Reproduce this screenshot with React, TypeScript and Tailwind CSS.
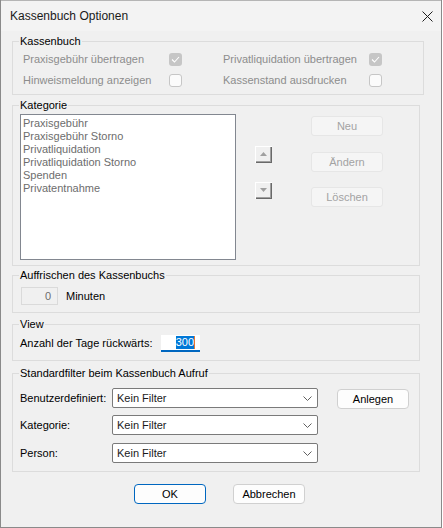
import React from 'react';

const font = { fontFamily: '"Liberation Sans", Arial, sans-serif' };

const CheckBox: React.FC<{ checked?: boolean }> = ({ checked }) => {
  if (checked) {
    return <div className="w-[13px] h-[13px] rounded-[3px] bg-[#c6c6c6] flex items-center justify-center">
        <svg width="9" height="7" viewBox="0 0 9 7">
          <path d="M1 3.5 L3.5 6 L8 1" fill="none" stroke="#ffffff" strokeWidth="1.1" />
        </svg>
      </div>;
  }
  return <div className="w-[13px] h-[13px] rounded-[3px] border border-[#c6c6c6] bg-[#fbfbfb]"></div>;
};

const ArrowButton: React.FC<{ down?: boolean }> = ({ down }) => {
  return <div className="w-[17px] h-[17px] bg-[#f0f0f0] flex items-center justify-center shadow-[inset_1px_1px_0_#ffffff,inset_-1px_-1px_0_#696969,inset_-2px_-2px_0_#a0a0a0]">
      <svg width="7" height="4" viewBox="0 0 7 4" className="-mt-px -ml-px">
        {down ? <path d="M0 0 H7 L3.5 4 Z" fill="#a0a0a0" /> : <path d="M0 4 H7 L3.5 0 Z" fill="#a0a0a0" />}
      </svg>
    </div>;
};

const DisabledButton: React.FC<{ label: string; className?: string }> = ({ label, className }) => {
  return <div className={`w-[72px] h-[20px] rounded-[3px] border border-[#e6e6e6] bg-[#f5f5f5] text-[#a3a3a3] text-[11px] flex items-center justify-center ${className || ''}`}>
      {label}
    </div>;
};

const Combo: React.FC = () => {
  return <div className="w-[206px] h-[20px] rounded-[2px] border border-[#7a7a7a] bg-white flex items-center pl-[4px] pr-[5px] text-[11px] text-[#1a1a1a]">
      <span className="flex-1">Kein Filter</span>
      <svg width="9" height="5" viewBox="0 0 9 5">
        <path d="M0.5 0.5 L4.5 4.5 L8.5 0.5" fill="none" stroke="#606060" strokeWidth="1" />
      </svg>
    </div>;
};

const Group: React.FC<{ title: string; className?: string; children: React.ReactNode }> = ({ title, className, children }) => {
  return <fieldset className={`w-[408px] border border-[#dcdcdc] ${className || ''}`}>
      <legend className="ml-[6px] px-[1px] text-[11px] leading-[15px] text-black">{title}</legend>
      {children}
    </fieldset>;
};

export default function App() {
  return <div style={font} className="w-[442px] h-[528px] bg-[#f0f0f0] border-l border-r border-b border-[#8a8a8a] flex flex-col text-[11px] text-black">
      <div className="h-[31px] bg-[#f3f3f3] flex items-center pl-[9px] pr-[8px] border-t border-[#b5b5b5]">
        <span className="flex-1 text-[12px] text-[#1a1a1a]">Kassenbuch Optionen</span>
        <svg width="11" height="11" viewBox="0 0 11 11">
          <path d="M0.5 0.5 L10.5 10.5 M10.5 0.5 L0.5 10.5" stroke="#1f1f1f" strokeWidth="1" />
        </svg>
      </div>

      <div className="pl-[11px] flex flex-col">
        <Group title="Kassenbuch" className="mt-[3px] pb-[3px]">
          <div className="flex flex-col pl-[10px] text-[#8d8d8d]">
            <div className="flex h-[21px] items-center">
              <div className="w-[200px] flex items-center">
                <span className="w-[146px]">Praxisgebühr übertragen</span>
                <CheckBox checked />
              </div>
              <div className="w-[200px] flex items-center">
                <span className="w-[146px]">Privatliquidation übertragen</span>
                <CheckBox checked />
              </div>
            </div>
            <div className="flex h-[21px] items-center">
              <div className="w-[200px] flex items-center">
                <span className="w-[146px]">Hinweismeldung anzeigen</span>
                <CheckBox />
              </div>
              <div className="w-[200px] flex items-center">
                <span className="w-[146px]">Kassenstand ausdrucken</span>
                <CheckBox />
              </div>
            </div>
          </div>
        </Group>

        <Group title="Kategorie" className="mt-[3px] pb-[5px]">
          <div className="flex pl-[7px] pt-[1px]">
            <div className="w-[216px] h-[146px] border border-[#828790] bg-white pl-[2px] pt-[2px] text-[11px] leading-[13px] text-[#6d6d6d]">
              <div>Praxisgebühr</div>
              <div>Praxisgebühr Storno</div>
              <div>Privatliquidation</div>
              <div>Privatliquidation Storno</div>
              <div>Spenden</div>
              <div>Privatentnahme</div>
            </div>
            <div className="ml-[19px] pt-[32px] flex flex-col">
              <ArrowButton />
              <div className="mt-[19px]">
                <ArrowButton down />
              </div>
            </div>
            <div className="ml-[39px] pt-[2px] flex flex-col">
              <DisabledButton label="Neu" />
              <DisabledButton label="Ändern" className="mt-[16px]" />
              <DisabledButton label="Löschen" className="mt-[15px]" />
            </div>
          </div>
        </Group>

        <Group title="Auffrischen des Kassenbuchs" className="mt-[2px] pb-[7px]">
          <div className="flex items-center pl-[8px] mt-[4px]">
            <div className="w-[37px] h-[18px] border border-[#dadada] bg-[#f0f0f0] flex items-center justify-end pr-[6px] text-[#6d6d6d]">0</div>
            <span className="ml-[8px]">Minuten</span>
          </div>
        </Group>

        <Group title="View" className="mt-[4px] pb-[8px]">
          <div className="flex items-center pl-[7px] mt-[3px]">
            <span className="w-[141px]">Anzahl der Tage rückwärts:</span>
            <div className="w-[39px] h-[17px] bg-white border-b-2 border-[#0067c0] flex items-center justify-end pr-[5px]">
              <span className="bg-[#0078d7] text-white leading-[13px]">300</span>
              <span className="w-px h-[13px] bg-[#e8772e]"></span>
            </div>
          </div>
        </Group>

        <Group title="Standardfilter beim Kassenbuch Aufruf" className="mt-[5px] pb-[8px]">
          <div className="flex pl-[7px] mt-[7px]">
            <div className="flex flex-col">
              <div className="flex items-center">
                <span className="w-[92px]">Benutzerdefiniert:</span>
                <Combo />
              </div>
              <div className="flex items-center mt-[7px]">
                <span className="w-[92px]">Kategorie:</span>
                <Combo />
              </div>
              <div className="flex items-center mt-[8px]">
                <span className="w-[92px]">Person:</span>
                <Combo />
              </div>
            </div>
            <div className="ml-[19px] mt-[1px] w-[72px] h-[20px] rounded-[4px] border border-[#d0d0d0] bg-[#fdfdfd] flex items-center justify-center">
              Anlegen
            </div>
          </div>
        </Group>

        <div className="flex mt-[12px] ml-[122px]">
          <div className="w-[72px] h-[20px] rounded-[4px] border border-[#0067c0] bg-[#fdfdfd] flex items-center justify-center">OK</div>
          <div className="ml-[27px] w-[72px] h-[20px] rounded-[4px] border border-[#d0d0d0] bg-[#fdfdfd] flex items-center justify-center">Abbrechen</div>
        </div>
      </div>
    </div>;
}
